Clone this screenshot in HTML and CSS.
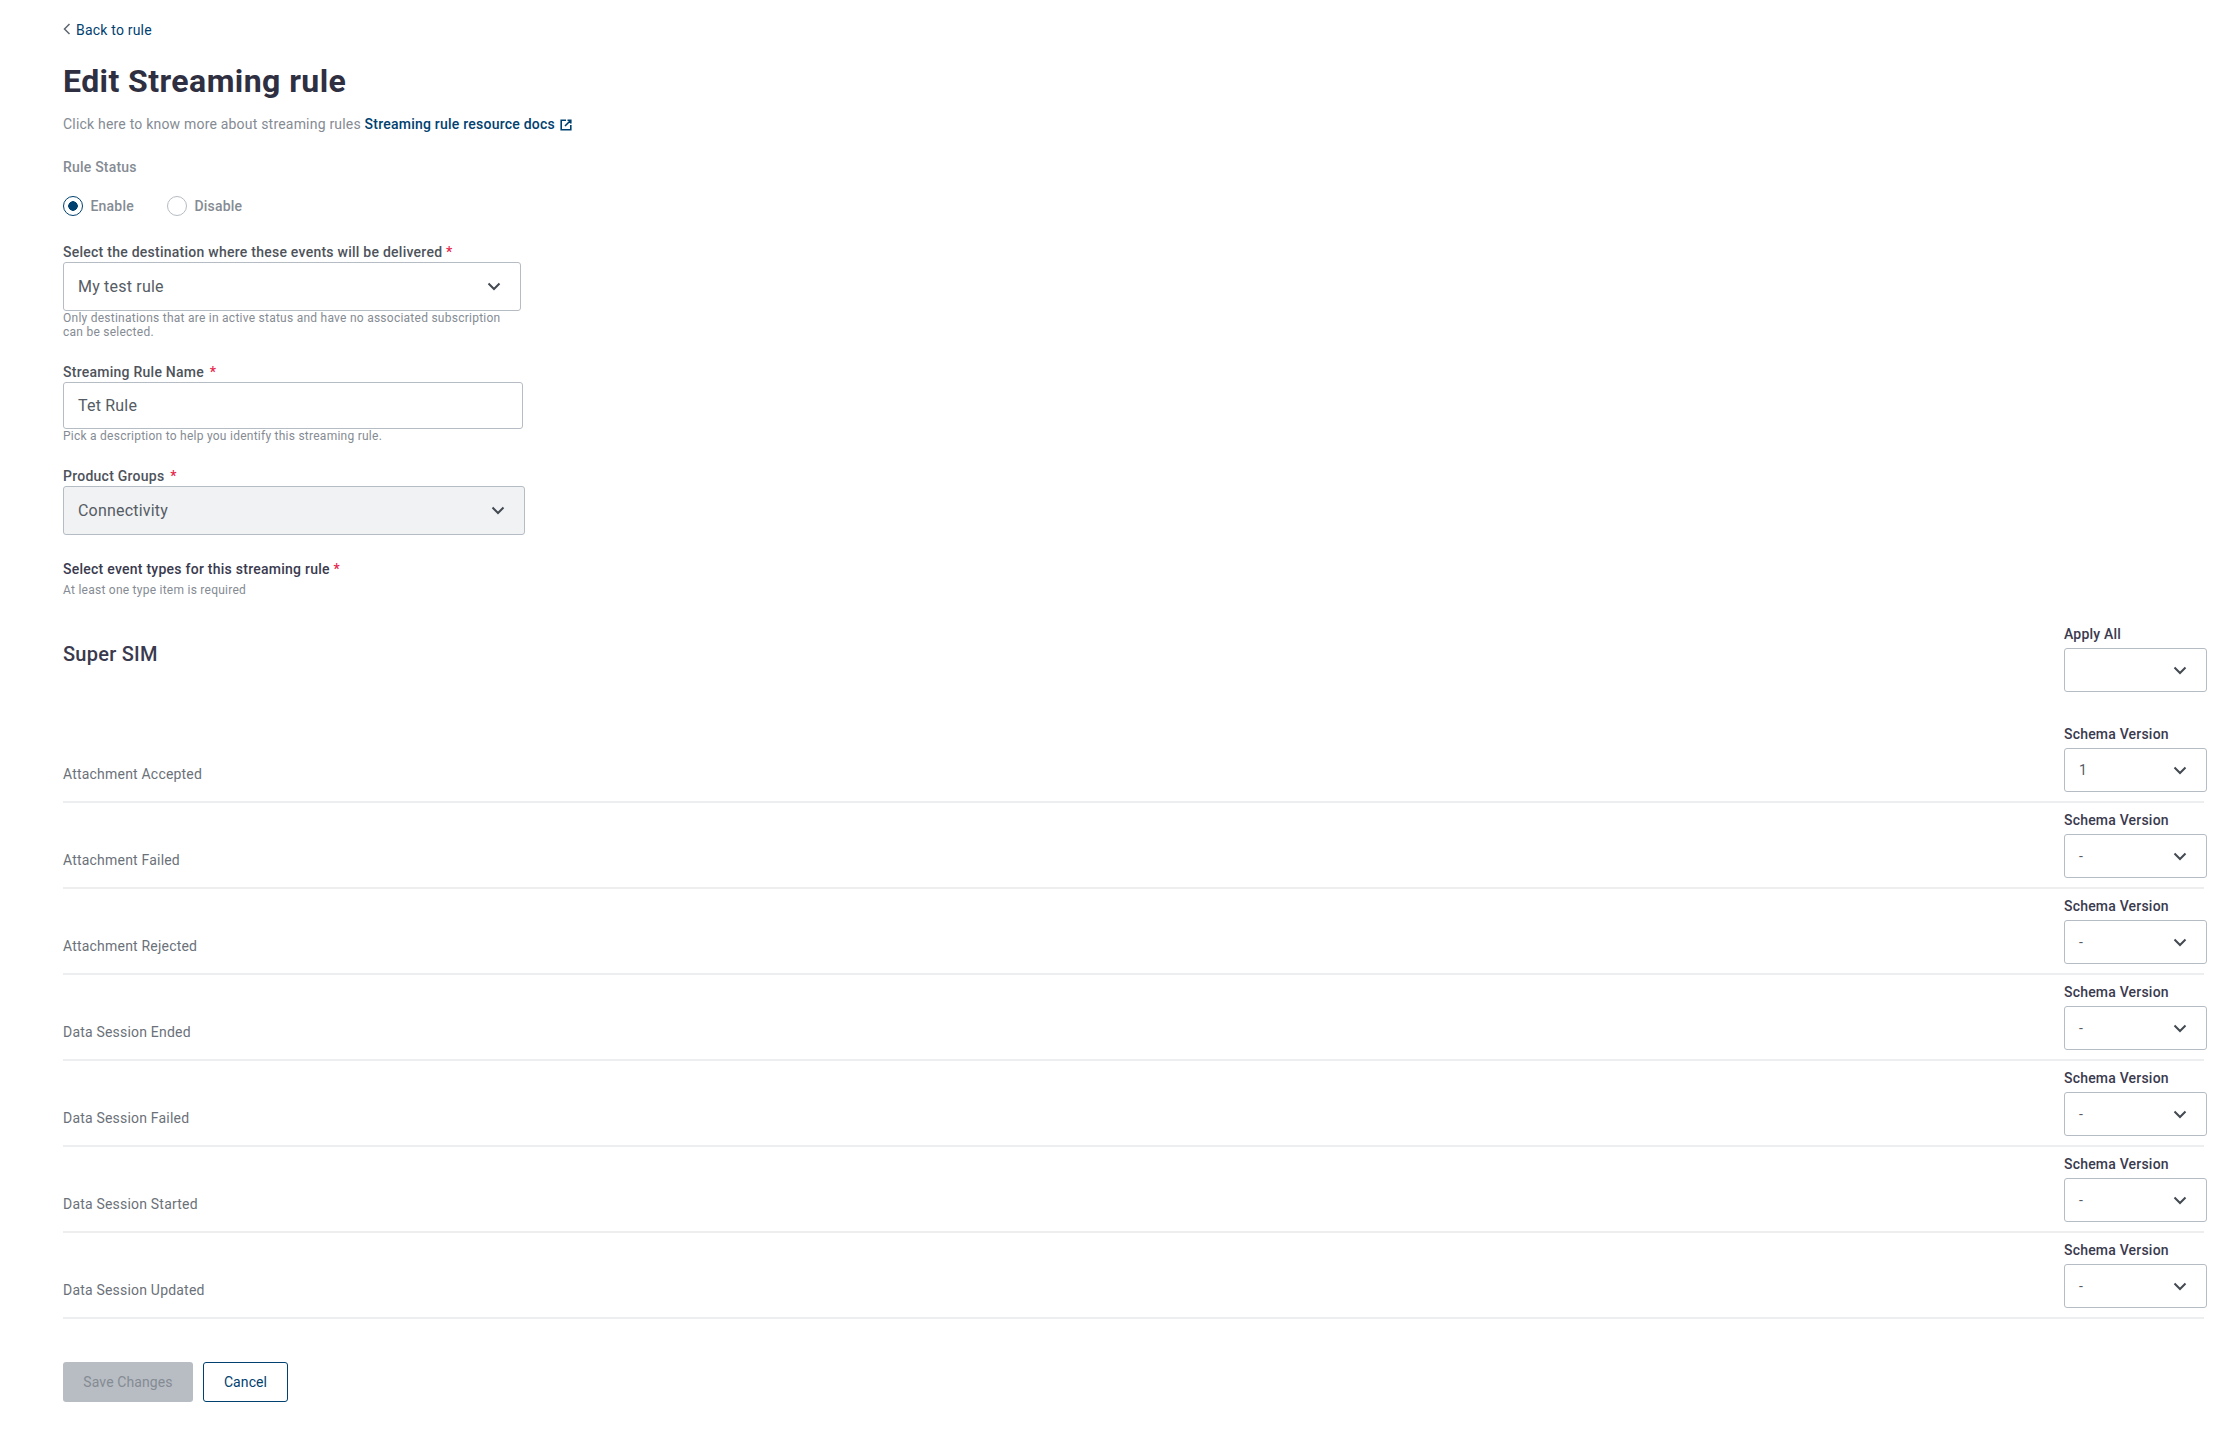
FILE: index.html
```html
<!DOCTYPE html>
<html lang="en">
<head>
<meta charset="utf-8">
<title>Edit Streaming rule</title>
<link rel="stylesheet" href="styles.css">
</head>
<body>
<main class="page">
  <a class="back" href="#"><svg class="back-icon" viewBox="0 0 8 12" width="8" height="12"><path d="M6.5 1 1.5 6l5 5" fill="none" stroke="#5f6670" stroke-width="1.5"/></svg>Back to rule</a>
  <h1 class="title">Edit Streaming rule</h1>
  <p class="intro">Click here to know more about streaming rules <a class="doc-link" href="#">Streaming rule resource docs<svg class="ext-icon" viewBox="0 0 12 12" width="12" height="12"><path d="M6 1.2H1.2v9.6h9.6V6M7.5 1.2h3.3v3.3M10.8 1.2 5 7" fill="none" stroke="#004170" stroke-width="1.6"/></svg></a></p>

  <div class="status-label">Rule Status</div>
  <div class="radios">
    <label class="radio"><span class="dot on"></span>Enable</label>
    <label class="radio"><span class="dot"></span>Disable</label>
  </div>

  <div class="field f-dest">
    <div class="label">Select the destination where these events will be delivered <span class="req">*</span></div>
    <div class="select w-dest"><span>My test rule</span><svg class="chev" viewBox="0 0 14 9" width="14" height="9"><path d="M1.5 1.5 7 7l5.5-5.5" fill="none" stroke="#444a52" stroke-width="2"/></svg></div>
    <div class="hint hint-wrap">Only destinations that are in active status and have no associated subscription can be selected.</div>
  </div>

  <div class="field f-name">
    <div class="label">Streaming Rule Name <span class="req req-gap">*</span></div>
    <div class="input">Tet Rule</div>
    <div class="hint">Pick a description to help you identify this streaming rule.</div>
  </div>

  <div class="field f-group">
    <div class="label">Product Groups <span class="req req-gap">*</span></div>
    <div class="select w-group disabled"><span>Connectivity</span><svg class="chev" viewBox="0 0 14 9" width="14" height="9"><path d="M1.5 1.5 7 7l5.5-5.5" fill="none" stroke="#444a52" stroke-width="2"/></svg></div>
  </div>

  <div class="types-label">Select event types for this streaming rule <span class="req">*</span></div>
  <div class="hint types-hint">At least one type item is required</div>

  <section class="group-head">
    <h2 class="group-title">Super SIM</h2>
    <div class="ver">
      <div class="ver-label">Apply All</div>
      <div class="select small"><span></span><svg class="chev" viewBox="0 0 14 9" width="14" height="9"><path d="M1.5 1.5 7 7l5.5-5.5" fill="none" stroke="#444a52" stroke-width="2"/></svg></div>
    </div>
  </section>

  <section class="rows">
    <div class="row"><span class="row-name">Attachment Accepted</span><div class="ver"><div class="ver-label">Schema Version</div><div class="select small"><span>1</span><svg class="chev" viewBox="0 0 14 9" width="14" height="9"><path d="M1.5 1.5 7 7l5.5-5.5" fill="none" stroke="#444a52" stroke-width="2"/></svg></div></div></div>
    <div class="row"><span class="row-name">Attachment Failed</span><div class="ver"><div class="ver-label">Schema Version</div><div class="select small"><span>-</span><svg class="chev" viewBox="0 0 14 9" width="14" height="9"><path d="M1.5 1.5 7 7l5.5-5.5" fill="none" stroke="#444a52" stroke-width="2"/></svg></div></div></div>
    <div class="row"><span class="row-name">Attachment Rejected</span><div class="ver"><div class="ver-label">Schema Version</div><div class="select small"><span>-</span><svg class="chev" viewBox="0 0 14 9" width="14" height="9"><path d="M1.5 1.5 7 7l5.5-5.5" fill="none" stroke="#444a52" stroke-width="2"/></svg></div></div></div>
    <div class="row"><span class="row-name">Data Session Ended</span><div class="ver"><div class="ver-label">Schema Version</div><div class="select small"><span>-</span><svg class="chev" viewBox="0 0 14 9" width="14" height="9"><path d="M1.5 1.5 7 7l5.5-5.5" fill="none" stroke="#444a52" stroke-width="2"/></svg></div></div></div>
    <div class="row"><span class="row-name">Data Session Failed</span><div class="ver"><div class="ver-label">Schema Version</div><div class="select small"><span>-</span><svg class="chev" viewBox="0 0 14 9" width="14" height="9"><path d="M1.5 1.5 7 7l5.5-5.5" fill="none" stroke="#444a52" stroke-width="2"/></svg></div></div></div>
    <div class="row"><span class="row-name">Data Session Started</span><div class="ver"><div class="ver-label">Schema Version</div><div class="select small"><span>-</span><svg class="chev" viewBox="0 0 14 9" width="14" height="9"><path d="M1.5 1.5 7 7l5.5-5.5" fill="none" stroke="#444a52" stroke-width="2"/></svg></div></div></div>
    <div class="row"><span class="row-name">Data Session Updated</span><div class="ver"><div class="ver-label">Schema Version</div><div class="select small"><span>-</span><svg class="chev" viewBox="0 0 14 9" width="14" height="9"><path d="M1.5 1.5 7 7l5.5-5.5" fill="none" stroke="#444a52" stroke-width="2"/></svg></div></div></div>
  </section>

  <div class="actions">
    <button class="btn save" type="button">Save Changes</button>
    <button class="btn cancel" type="button">Cancel</button>
  </div>
</main>
</body>
</html>
```

FILE: styles.css
```css
* { box-sizing: border-box; }
html, body { margin: 0; background: #fff; }
body { font-family: Roboto, "Liberation Sans", sans-serif; font-size: 14px; letter-spacing: .2px; color: #394049; }
.page { padding: 20px 35px 0 63px; height: 1435px; overflow: hidden; }
a { text-decoration: none; }

.back { display: flex; align-items: center; height: 20px; font-size: 14px; color: #004170; }
.back-icon { margin-right: 5px; margin-top: -2px; }

.title { margin: 21px 0 0; font-size: 32px; line-height: 40px; font-weight: 700; letter-spacing: .43px; color: #2f2f42; }

.intro { margin: 13px 0 0; line-height: 20px; color: #858b93; font-size: 14px; }
.doc-link { color: #004170; font-weight: 500; letter-spacing: .23px; }
.ext-icon { margin-left: 5px; vertical-align: -2px; }

.status-label { margin-top: 23px; line-height: 20px; font-weight: 500; color: #858b93; }
.radios { display: flex; gap: 33px; margin-top: 19px; height: 20px; }
.radio { display: flex; align-items: center; font-weight: 500; color: #858b93; }
.dot { width: 20px; height: 20px; margin-right: 7.5px; border-radius: 50%; border: 1px solid #b6bcc3; background: #fff; }
.dot.on { border-color: #004170; background: radial-gradient(circle, #004170 0 4.5px, #fff 5px); }

.label { line-height: 18px; font-weight: 500; letter-spacing: .25px; color: #4e535b; margin-bottom: 1px; }
.req { color: #e5254b; }
.req-gap { margin-left: 2px; }
.f-dest { margin-top: 27px; }
.f-name { margin-top: 24px; }
.f-group { margin-top: 24px; }

.select, .input { display: flex; align-items: center; justify-content: space-between; border: 1px solid #b6bcc3; border-radius: 3px; background: #fff; padding: 0 19px 0 14px; font-size: 16px; color: #565c64; }
.w-dest { width: 458px; height: 49px; }
.input { width: 460px; height: 47px; }
.w-group { width: 462px; height: 49px; }
.disabled { background: #f1f2f4; }
.chev { flex: none; }

.hint { font-size: 12px; line-height: 14px; letter-spacing: .25px; color: #858b93; }
.hint-wrap { width: 450px; }

.types-label { margin-top: 24px; line-height: 20px; font-weight: 500; letter-spacing: .25px; color: #3a3a4e; }
.types-hint { margin-top: 4px; }

.group-head { display: flex; justify-content: space-between; margin-top: 27px; }
.group-title { margin: 16px 0 0; font-size: 20px; line-height: 28px; font-weight: 500; letter-spacing: .25px; color: #3a3a4e; }
.group-head > .ver { margin-right: -3px; }

.ver { width: 143px; flex: none; }
.ver-label { line-height: 20px; font-weight: 500; color: #3a3a4e; height: 20px; margin-bottom: 4px; }
.small { height: 44px; padding: 0 19px 0 14px; font-size: 14px; }

.rows { margin-top: 25px; }
.row { display: flex; justify-content: space-between; align-items: flex-end; height: 86px; border-bottom: 2px solid #eceef0; padding-bottom: 9px; }
.row-name { color: #6b7179; line-height: 20px; margin-bottom: 8px; }
.row > .ver { margin-right: -3px; }

.actions { display: flex; gap: 10px; margin-top: 43px; }
.btn { height: 40px; border-radius: 3px; font-family: inherit; font-size: 14px; letter-spacing: .1px; padding: 0; }
.save { width: 130px; background: #b7bdc3; border: 0; color: #858b93; }
.cancel { width: 85px; background: #fff; border: 1px solid #004170; color: #004170; }
```
